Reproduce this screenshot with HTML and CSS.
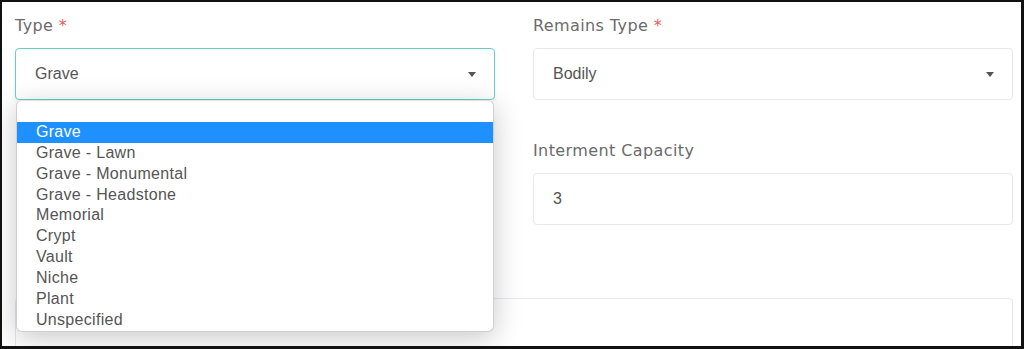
FILE: index.html
```html
<!DOCTYPE html>
<html lang="en">
<head>
    <meta charset="UTF-8">
    <meta name="viewport" content="width=device-width, initial-scale=1.0">
    <title>Plot details</title>
    <link rel="stylesheet" href="styles.css">
</head>
<body>
    <div class="frame">
        <div class="form-grid">
            <div class="field">
                <label class="field-label">Type <span class="req">*</span></label>
                <div class="select-box focused">
                    <span class="select-value">Grave</span>
                    <span class="caret"></span>
                </div>
                <!-- открытый список -->
                <ul class="dropdown">
                    <li class="blank"></li>
                    <li class="selected">Grave</li>
                    <li>Grave - Lawn</li>
                    <li>Grave - Monumental</li>
                    <li>Grave - Headstone</li>
                    <li>Memorial</li>
                    <li>Crypt</li>
                    <li>Vault</li>
                    <li>Niche</li>
                    <li>Plant</li>
                    <li>Unspecified</li>
                </ul>
            </div>

            <div class="field">
                <label class="field-label">Remains Type <span class="req">*</span></label>
                <div class="select-box">
                    <span class="select-value">Bodily</span>
                    <span class="caret"></span>
                </div>
            </div>

            <div class="field"></div>

            <div class="field">
                <label class="field-label">Interment Capacity</label>
                <div class="input-box">
                    <span class="select-value">3</span>
                </div>
            </div>

            <div class="field wide">
                <div class="label-space"></div>
                <div class="textarea-box"></div>
            </div>
        </div>
    </div>
</body>
</html>
```

FILE: styles.css
```css
    * {
        box-sizing: border-box;
    }

    body {
        margin: 0;
        background: #ffffff;
    }

    .frame {
        width: 1024px;
        height: 349px;
        border-style: solid;
        border-color: #111;
        border-width: 2px 3px 3px 2px;
        padding: 12px 8px 0 13px;
        overflow: hidden;
        background: #fff;
    }

    .form-grid {
        display: grid;
        grid-template-columns: 1fr 1fr;
        column-gap: 38px;
        row-gap: 39px;
    }

    .field {
        position: relative;
        display: flex;
        flex-direction: column;
    }

    .field.wide {
        grid-column: 1 / 3;
    }

    .field-label {
        font-family: "DejaVu Sans", sans-serif;
        font-size: 16px;
        line-height: 24px;
        letter-spacing: 0.4px;
        color: #6b6b6b;
        margin-bottom: 10px;
    }

    .label-space {
        height: 34px;
    }

    .req {
        color: #ec5a55;
    }

    .select-box,
    .input-box,
    .textarea-box {
        height: 52px;
        border: 1px solid #e7e8ef;
        border-radius: 4px;
        display: flex;
        align-items: center;
        padding: 0 18px 0 19px;
        background: #fff;
    }

    .textarea-box {
        height: 90px;
    }

    .select-box.focused {
        border-color: #66d0c6;
        box-shadow: 0 2px 4px rgba(0, 0, 0, 0.06);
    }

    .select-value {
        flex: 1;
        font-family: "Liberation Sans", Arial, sans-serif;
        font-size: 16px;
        color: #555;
    }

    .caret {
        width: 0;
        height: 0;
        border-left: 4.5px solid transparent;
        border-right: 4.5px solid transparent;
        border-top: 5px solid #555;
    }

    /* выпадающий список поверх полей */
    .dropdown {
        position: absolute;
        top: 86px;
        left: 1px;
        width: 478px;
        margin: 0;
        padding: 0;
        list-style: none;
        background: #fff;
        border: 1px solid #d0d0d0;
        border-top-color: #e2e2e2;
        border-radius: 6px;
        box-shadow: 0 6px 28px rgba(0, 0, 0, 0.22);
        z-index: 10;
    }

    .dropdown li {
        height: 20.9px;
        line-height: 20.9px;
        padding-left: 19px;
        font-family: "Liberation Sans", Arial, sans-serif;
        font-size: 16px;
        letter-spacing: 0.3px;
        color: #555;
    }

    .dropdown li.selected {
        background: #1e90ff;
        color: #fff;
    }
```
